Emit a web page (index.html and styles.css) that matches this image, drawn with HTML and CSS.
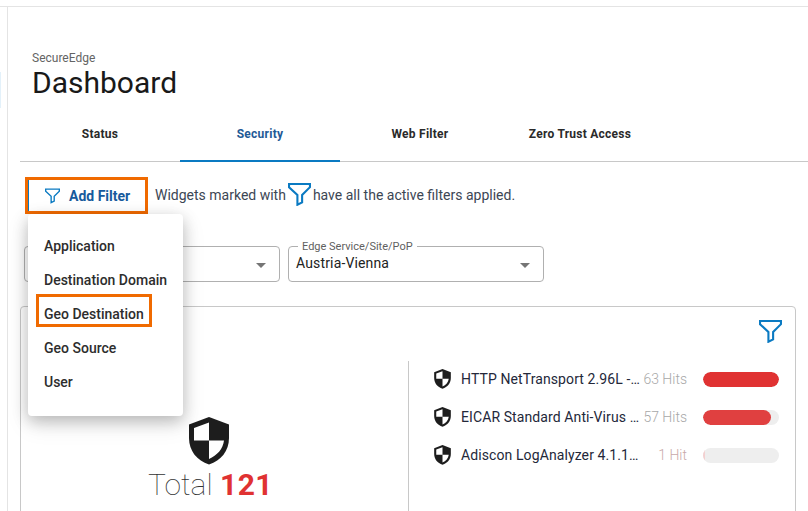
FILE: index.html
```html
<!DOCTYPE html>
<html lang="en">
<head>
<meta charset="utf-8">
<title>Dashboard</title>
<link rel="stylesheet" href="styles.css">
</head>
<body>
<svg class="defs" width="0" height="0" aria-hidden="true">
  <symbol id="shield" viewBox="0 0 40 48">
    <path fill="#1d1d1d" d="M20 0 40 7.500V21C40 34 32 43.500 20 47.500 8 43.500 0 34 0 21V7.500Z"/>
    <path fill="#fff" d="M20 5.500 5 11V23.500H20ZM20 23.500V42C28 38.500 34 32 35 23.500Z"/>
  </symbol>
  <symbol id="funnel" viewBox="0 0 22 22">
    <path fill="none" stroke="currentColor" stroke-width="2" d="M1 1H21V4L13.500 11.500V18.500L9 20.800V11.500L1 4Z"/>
  </symbol>
</svg>
<div class="shell">
  <div class="rail"><span class="rail-mark"></span></div>
  <main class="main">
    <header class="head">
      <div class="crumb">SecureEdge</div>
      <h1 class="title">Dashboard</h1>
    </header>
    <nav class="tabs">
      <a class="tab">Status</a>
      <a class="tab tab-active">Security</a>
      <a class="tab">Web Filter</a>
      <a class="tab">Zero Trust Access</a>
    </nav>
    <div class="filterbar">
      <div class="highlight">
        <button class="addfilter">
          <svg class="addfilter-icon"><use href="#funnel"/></svg>
          Add Filter
        </button>
      </div>
      <p class="note"><span>Widgets marked with</span><svg class="note-icon"><use href="#funnel"/></svg><span>have all the active filters applied.</span></p>
      <ul class="menu">
        <li class="menu-item">Application</li>
        <li class="menu-item">Destination Domain</li>
        <li class="menu-item"><span class="menu-mark">Geo Destination</span></li>
        <li class="menu-item">Geo Source</li>
        <li class="menu-item">User</li>
      </ul>
    </div>
    <div class="selects">
      <div class="select"><span class="caret"></span></div>
      <div class="select">
        <span class="select-label">Edge Service/Site/PoP</span>
        <span class="select-value">Austria-Vienna</span>
        <span class="caret"></span>
      </div>
    </div>
    <section class="card">
      <div class="card-top">
        <svg class="card-icon"><use href="#funnel"/></svg>
      </div>
      <div class="card-body">
        <div class="total">
          <svg class="total-shield"><use href="#shield"/></svg>
          <div class="total-text"><span class="total-word">Total</span> <b class="total-num">121</b></div>
        </div>
        <div class="list">
          <div class="row">
            <svg class="row-shield"><use href="#shield"/></svg>
            <span class="row-name">HTTP NetTransport 2.96L -…</span>
            <span class="row-hits">63 Hits</span>
            <span class="bar"><span class="fill" style="width:100%"></span></span>
          </div>
          <div class="row">
            <svg class="row-shield"><use href="#shield"/></svg>
            <span class="row-name">EICAR Standard Anti-Virus …</span>
            <span class="row-hits">57 Hits</span>
            <span class="bar"><span class="fill fill-b" style="width:90%"></span></span>
          </div>
          <div class="row">
            <svg class="row-shield"><use href="#shield"/></svg>
            <span class="row-name">Adiscon LogAnalyzer 4.1.1…</span>
            <span class="row-hits row-hits-low">1 Hit</span>
            <span class="bar"><span class="fill fill-c" style="width:2%"></span></span>
          </div>
        </div>
      </div>
    </section>
  </main>
</div>
</body>
</html>
```
FILE: styles.css
```css
* { box-sizing: border-box; }
html, body { margin: 0; height: 100%; overflow: hidden; background: #fff; }
body { font-family: Roboto, "Liberation Sans", sans-serif; color: #1f2937; }
.defs { position: absolute; }
.shell { display: flex; height: 505px; margin-top: 6px; border-top: 1px solid #e4e4e4; }
.rail { width: 8px; flex: none; border-right: 1px solid #e4e4e4; padding-top: 65px; }
.rail-mark { display: block; width: 1px; height: 36px; background: #e3f1fa; }
.main { flex: 1; min-width: 0; padding: 0 0 0 12px; overflow: hidden; }
.head { padding: 44px 0 0 12px; height: 113px; }
.crumb { font-size: 12px; line-height: 14px; color: #646464; font-weight: 400; }
.title { margin: 0; font-size: 30px; line-height: 36px; font-weight: 400; color: #191919; }
.tabs { display: flex; height: 42px; border-bottom: 1px solid #c8c8c8; }
.tab { width: 160px; height: 42px; padding-top: 4px; text-align: center; font-size: 12px; line-height: 20px; font-weight: 700; color: #2a2a2a; letter-spacing: 0.25px; }
.tab-active { color: #1f5a96; border-bottom: 2px solid #0a7ac2; }
.filterbar { position: relative; display: flex; align-items: center; gap: 7px; height: 37px; margin-top: 15px; padding-left: 5px; }
.highlight { border: 3px solid #f06a00; width: 123px; height: 37px; flex: none; }
.addfilter { display: flex; align-items: center; gap: 9px; width: 100%; height: 100%; padding: 0 0 0 16px; border: 0; border-left: 1px solid #0a7ac2; background: #fff; font: 700 14px Roboto, sans-serif; color: #175a9c; }
.addfilter-icon { width: 15px; height: 16px; color: #0a7ac2; }
.note { margin: -2px 0 0; display: flex; align-items: center; gap: 2px; font-size: 14px; color: #3c4654; white-space: nowrap; }
.note-icon { width: 23px; height: 23px; color: #0a7ac2; }
.menu { position: absolute; left: 8px; top: 37px; width: 155px; height: 202px; margin: 0; padding: 15px 0; list-style: none; background: #fff; border-radius: 4px; box-shadow: 0 5px 15px rgba(0,0,0,.22), 0 8px 24px rgba(0,0,0,.1); z-index: 2; }
.menu-item { display: flow-root; height: 34px; line-height: 34px; padding-left: 16px; font-size: 14px; font-weight: 500; color: #2d2d2d; white-space: nowrap; }
.menu-mark { display: block; width: 116px; height: 33px; line-height: 34px; margin-left: -8px; margin-top: -3px; padding-left: 5px; border: 3px solid #f06a00; }
.selects { display: flex; gap: 8px; margin-top: 32px; padding-left: 4px; }
.select { position: relative; width: 256px; height: 36px; border: 1px solid #b0b0b0; border-radius: 4px; padding-left: 7px; line-height: 33px; font-size: 14px; color: #222; }
.select-label { position: absolute; left: 9px; top: -7px; padding: 0 4px; background: #fff; font-size: 11px; line-height: 13px; color: #5f5f5f; }
.select-value { display: block; letter-spacing: 0.15px; }
.caret { position: absolute; right: 13px; top: 16px; border: 5px solid transparent; border-top-color: #757575; border-bottom: 0; }
.card { margin-top: 24px; width: 776px; height: 240px; border: 1px solid #c8c8c8; border-radius: 4px; }
.card-top { display: flex; justify-content: flex-end; height: 54px; padding: 13px 13px 0 0; }
.card-icon { width: 23px; height: 23px; color: #0a7ac2; }
.card-body { display: flex; }
.total { width: 388px; flex: none; padding-top: 56px; display: flex; flex-direction: column; align-items: center; margin-left: -1px; }
.total-shield { width: 40px; height: 48px; margin-left: -10px; }
.total-text { font-size: 30px; line-height: 38px; margin-top: 1px; margin-left: -7px; white-space: nowrap; }
.total-word { font-weight: 100; color: #333; }
.total-num { font-weight: 700; color: #e03232; letter-spacing: .4px; }
.list { flex: 1; min-height: 160px; border-left: 1px solid #c8c8c8; padding: 0 16px 0 25px; }
.row { display: flex; align-items: center; height: 38px; padding-bottom: 2px; }
.row-shield { width: 17px; height: 20px; flex: none; margin-right: 10px; }
.row-name { width: 180px; white-space: nowrap; font-size: 14px; color: #24283a; letter-spacing: 0.1px; }
.row-hits { width: 46px; text-align: right; white-space: nowrap; font-size: 14px; font-weight: 300; color: #a8a8a8; }
.row-hits-low { color: #c9a9a9; }
.bar { display: block; width: 76px; height: 15px; margin-left: 16px; border-radius: 8px; background: #eeeeee; overflow: hidden; }
.fill { display: block; height: 100%; border-radius: 8px; background: #e03232; }
.fill-b { background: #e04040; }
.fill-c { background: #f3d0d0; }
```
